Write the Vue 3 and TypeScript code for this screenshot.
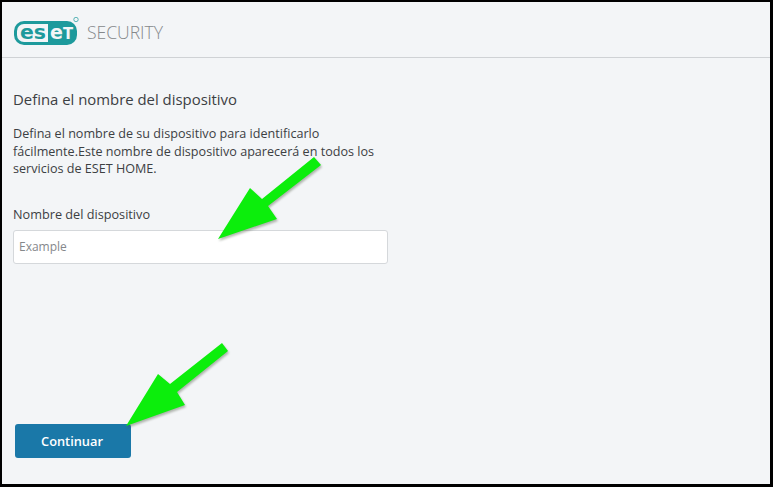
<template>
  <div class="frame">
    <header class="top-bar">
      <div class="logo">
        <svg class="logo-mark" viewBox="0 0 66 28" width="66" height="28" role="img" aria-label="ESET">
          <rect x="0" y="4" width="63" height="24" rx="10" fill="#1d9a9c" />
          <path d="M10 7h24v18H10a7 7 0 0 1-7-7v-4a7 7 0 0 1 7-7z" fill="#f3f5f7" />
          <text class="logo-dark" x="6" y="21.5" textLength="26" lengthAdjust="spacingAndGlyphs">es</text>
          <text class="logo-light" x="36" y="21.5" textLength="23" lengthAdjust="spacingAndGlyphs">e<tspan class="logo-t">T</tspan></text>
          <circle cx="62" cy="2.5" r="2.2" fill="none" stroke="#1d9a9c" stroke-width="0.7" />
        </svg>
        <span class="product">SECURITY</span>
      </div>
    </header>

    <main class="content">
      <h1 class="title">{{ title }}</h1>
      <p class="description">{{ description }}</p>
      <label class="field-label" for="device-name">Nombre del dispositivo</label>
      <input id="device-name" class="field" type="text" placeholder="Example" />
      <button class="continue" type="button">Continuar</button>
    </main>

    <svg class="arrows" viewBox="0 0 773 487" width="773" height="487" aria-hidden="true">
      <polygon
        v-for="arrow in arrows"
        :key="arrow"
        :points="arrow"
        fill="#0cee0c"
      />
    </svg>
  </div>
</template>

<script setup lang="ts">
const title = 'Defina el nombre del dispositivo'
const description =
  'Defina el nombre de su dispositivo para identificarlo fácilmente.Este nombre de dispositivo aparecerá en todos los servicios de ESET HOME.'

const arrows = [
  '314,157 321,165 268,206 277,219 218,239 250,188 262,199',
  '222,343 228,351 177,392 185,405 126,426 158,374 170,384',
]
</script>

<style>
html,
body {
  margin: 0;
  background: #000;
}
</style>

<style scoped>
.frame {
  position: relative;
  box-sizing: border-box;
  width: 773px;
  height: 487px;
  border: solid #000;
  border-width: 2px 3px 3px 2px;
  background: #f3f5f7;
  display: flex;
  flex-direction: column;
  font-family: "Open Sans", "Noto Sans", sans-serif;
  color: #3c4043;
}

.top-bar {
  height: 56px;
  box-sizing: border-box;
  border-bottom: 1px solid #cfd2d5;
  padding: 15px 0 0 12px;
}

.logo {
  display: flex;
  align-items: flex-start;
  gap: 7px;
}

.logo-mark {
  display: block;
}

.logo-mark text {
  font-family: "DejaVu Sans", sans-serif;
  font-weight: 700;
  font-size: 20px;
}

.logo-mark .logo-t {
  font-size: 15.5px;
}

.logo-dark {
  fill: #1d9a9c;
}

.logo-light {
  fill: #f3f5f7;
}

.product {
  margin-top: 3px;
  font-size: 17.6px;
  line-height: 24px;
  font-weight: 300;
  letter-spacing: -0.05px;
  color: #85888b;
}

.content {
  flex: 1;
  display: flex;
  flex-direction: column;
  align-items: flex-start;
  padding: 31px 0 26px 11px;
}

.title {
  margin: 0;
  font-size: 14.9px;
  line-height: 20px;
  font-weight: 400;
}

.description {
  margin: 16px 0 0;
  width: 375px;
  font-size: 12.6px;
  line-height: 17.5px;
}

.field-label {
  margin-top: 28px;
  font-size: 12.7px;
  line-height: 17px;
}

.field {
  margin-top: 7px;
  box-sizing: border-box;
  width: 375px;
  height: 34px;
  padding: 0 5px;
  border: 1px solid #d5d8db;
  border-radius: 3px;
  background: #fff;
  font: inherit;
  font-size: 12px;
}

.field::placeholder {
  color: #85888b;
  opacity: 1;
}

.continue {
  margin: auto 0 0 2px;
  width: 116px;
  height: 34px;
  padding: 0 2px 0 0;
  border: none;
  border-radius: 3px;
  background: #1a78a8;
  color: #fff;
  font: inherit;
  font-size: 12.8px;
  font-weight: 600;
}

.arrows {
  position: absolute;
  left: -2px;
  top: -2px;
  filter: drop-shadow(1px 2px 1px rgba(70, 80, 60, 0.4));
  pointer-events: none;
}
</style>
